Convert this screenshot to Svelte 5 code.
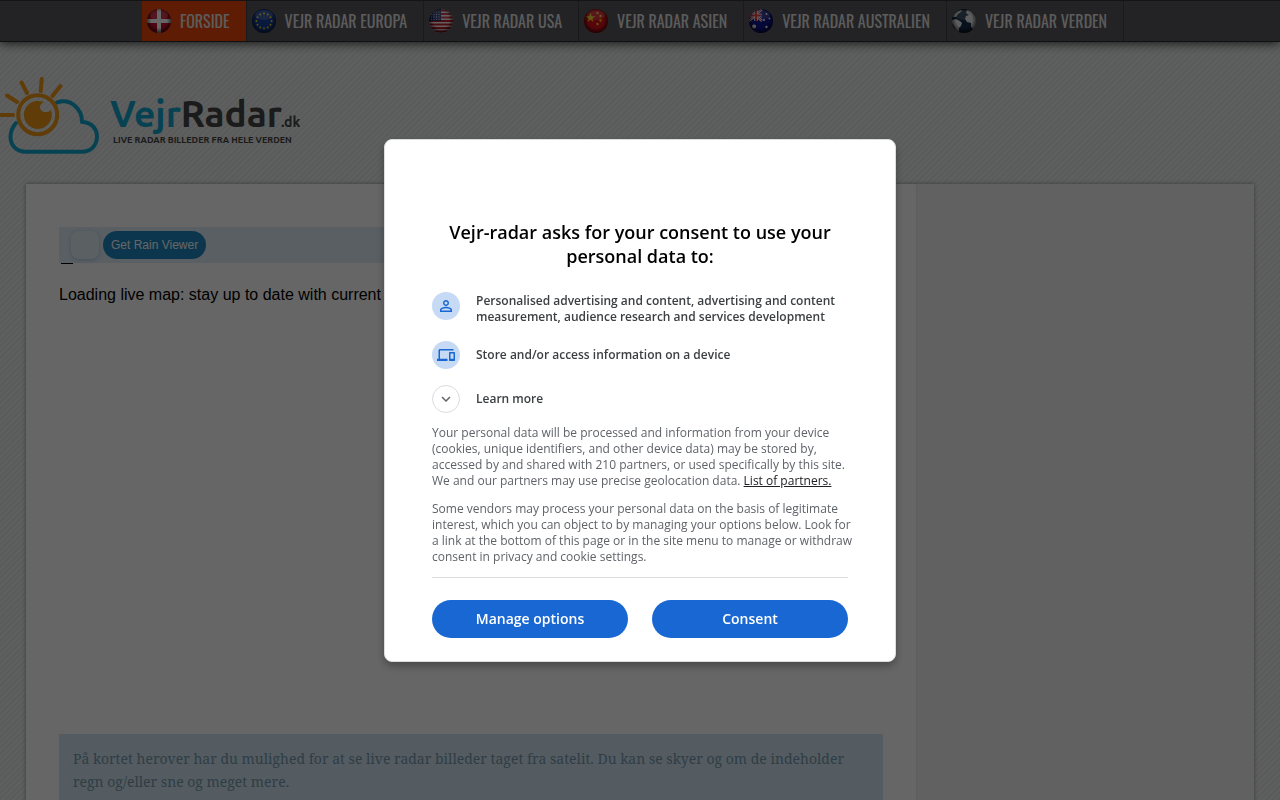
<script lang="ts">
  const regions = [
    { flag: "dk", label: "Forside" },
    { flag: "eu", label: "Vejr Radar Europa" },
    { flag: "us", label: "Vejr Radar USA" },
    { flag: "cn", label: "Vejr Radar Asien" },
    { flag: "au", label: "Vejr Radar Australien" },
    { flag: "world", label: "Vejr Radar Verden" },
  ]

  const euStars = Array.from({ length: 12 }, (_, i) => {
    const angle = (i * Math.PI) / 6
    return { x: 12 + 7.6 * Math.sin(angle), y: 12 - 7.6 * Math.cos(angle) }
  })

  let active = $state("dk")
</script>

<div class="page">
  <nav class="topbar" aria-label="Regioner">
    <ul>
      {#each regions as region}
        <li class:active={region.flag === active}>
          <a href="#{region.flag}" onclick={() => (active = region.flag)}>
            <svg class="flag" viewBox="0 0 24 24" aria-hidden="true">
              <g clip-path="url(#round)">
                {#if region.flag === "dk"}
                  <rect width="24" height="24" fill="#c8102e" />
                  <path d="M12 0V24M0 12H24" stroke="#fff" stroke-width="4" />
                {:else if region.flag === "eu"}
                  <rect width="24" height="24" fill="#16409c" />
                  {#each euStars as star}
                    <circle cx={star.x} cy={star.y} r="1" fill="#f0c810" />
                  {/each}
                {:else if region.flag === "us"}
                  <rect width="24" height="24" fill="#f0f0f0" />
                  <path
                    d="M0 1.500H24M0 5H24M0 8.500H24M0 12H24M0 15.500H24M0 19H24M0 22.500H24"
                    stroke="#c41a2c"
                    stroke-width="1.800"
                  />
                  <rect width="12" height="12" fill="#20306e" />
                  <path
                    d="M2 3H12M2 5.500H12M2 8H12M2 10.500H12"
                    stroke="#dde"
                    stroke-width="0.900"
                    stroke-dasharray="1 1.500"
                  />
                {:else if region.flag === "cn"}
                  <rect width="24" height="24" fill="#d8101a" />
                  <path
                    d="M6.500 3.500L7.700 7.200H11.500L8.400 9.500L9.600 13L6.500 10.800L3.400 13L4.600 9.500L1.500 7.200H5.300Z"
                    fill="#f5cf18"
                  />
                  <g fill="#f5cf18">
                    <circle cx="13.500" cy="4" r="1.200" />
                    <circle cx="16.500" cy="7" r="1.200" />
                    <circle cx="16.500" cy="11.500" r="1.200" />
                    <circle cx="13.500" cy="15" r="1.200" />
                  </g>
                {:else if region.flag === "au"}
                  <rect width="24" height="24" fill="#10148c" />
                  <path d="M0 0L13 12M13 0L0 12" stroke="#eee" stroke-width="2.400" />
                  <path d="M0 0L13 12M13 0L0 12" stroke="#d01c2c" stroke-width="0.900" />
                  <path d="M7 0V12M0 6.500H13" stroke="#eee" stroke-width="3.600" />
                  <path d="M7 0V12M0 6.500H13" stroke="#d8202c" stroke-width="2" />
                  <g fill="#fff">
                    <circle cx="5" cy="17.500" r="2" />
                    <circle cx="17.500" cy="5" r="1" />
                    <circle cx="15" cy="11" r="1" />
                    <circle cx="20.500" cy="9.500" r="1" />
                    <circle cx="17.500" cy="18" r="1.200" />
                  </g>
                {:else}
                  <rect width="24" height="24" fill="#142c48" />
                  <path
                    d="M0 11L4 10L8 12L10 14L9 17L7 19L7 23L4 21L2 17L0 14ZM2 5L6 2L10 1L9 3L6 5L4 8L1 8Z"
                    fill="#e6e8ea"
                  />
                  <path
                    d="M15 1L19 2L24 8V16L21 20L19 18L19 14L15 13L13 10L14 7L17 6L14 4Z"
                    fill="#e6e8ea"
                  />
                {/if}
                <rect width="24" height="24" fill="url(#shade)" />
                <ellipse cx="12" cy="6" rx="9" ry="5" fill="#fff" opacity="0.180" />
              </g>
            </svg>
            <span>{region.label}</span>
          </a>
        </li>
      {/each}
    </ul>
  </nav>

  <header class="masthead">
    <a href="#dk" aria-label="VejrRadar.dk">
      <svg class="logo" viewBox="0 0 300 90" aria-hidden="true">
        <defs>
          <clipPath id="round"><circle cx="12" cy="12" r="12" /></clipPath>
          <radialGradient id="shade" cx="0.500" cy="0.450" r="0.550">
            <stop offset="0.600" stop-color="#000" stop-opacity="0" />
            <stop offset="1" stop-color="#000" stop-opacity="0.650" />
          </radialGradient>
        </defs>
        <g fill="none" stroke-linecap="round">
          <path
            d="M57 32.500C70 28 82 38 82 52C91 52 97 58.500 97 66.500C97 75 91 81.700 82 81.700H26C16 81.700 10.500 75 10.500 67C10.500 61 12.500 57 16 53"
            stroke="#12a5cf"
            stroke-width="4"
            stroke-linejoin="round"
          />
          <circle cx="37.700" cy="44.700" r="19.500" stroke="#ee9716" stroke-width="4" />
          <path
            d="M1 45H13M7 25.500L17 32M21.500 12.500L27 23M41.700 9L40.700 21M60.500 16L52.500 26"
            stroke="#ee9716"
            stroke-width="4"
          />
        </g>
        <path
          d="M42 31.500A14 14 0 1 0 51 40C48 43 43 43 41 40C39 37 40 34 44 32Z"
          fill="#ee9716"
        />
        <text class="wordmark" x="110" y="57">
          <tspan fill="#12a5cf">Vejr</tspan><tspan fill="#444">Radar</tspan>
        </text>
        <text class="tld" x="281" y="57">.dk</text>
        <text class="tagline" x="113" y="73">LIVE RADAR BILLEDER FRA HELE VERDEN</text>
      </svg>
    </a>
  </header>

  <div class="card">
    <main>
      <div class="viewer-bar">
        <span class="viewer-icon"></span>
        <a class="viewer-link" href="#viewer">Get Rain Viewer</a>
      </div>
      <div class="map">
        <span class="dash"></span>
        <p>Loading live map: stay up to date with current</p>
      </div>
      <p class="notice">
        På kortet herover har du mulighed for at se live radar billeder taget fra satelit. Du kan
        se skyer og om de indeholder regn og/eller sne og meget mere.
      </p>
    </main>
    <aside></aside>
  </div>
</div>

<div class="overlay">
  <div class="dialog" role="dialog" aria-modal="true" aria-labelledby="consent-title">
    <h1 id="consent-title">Vejr-radar asks for your consent to use your personal data to:</h1>

    <ul class="purposes">
      <li>
        <span class="badge">
          <svg viewBox="0 0 24 24" aria-hidden="true">
            <path
              d="M12 5.900a2.100 2.100 0 1 1 0 4.200 2.100 2.100 0 0 1 0-4.200m0 9c2.970 0 6.100 1.460 6.100 2.100v1.100H5.900V17c0-.640 3.130-2.100 6.100-2.100M12 4C9.790 4 8 5.790 8 8s1.790 4 4 4 4-1.790 4-4-1.790-4-4-4zm0 9c-2.670 0-8 1.340-8 4v3h16v-3c0-2.660-5.330-4-8-4z"
            />
          </svg>
        </span>
        <span>
          Personalised advertising and content, advertising and content measurement, audience
          research and services development
        </span>
      </li>
      <li>
        <span class="badge">
          <svg viewBox="0 0 24 24" aria-hidden="true">
            <path
              d="M4 6h18V4H4c-1.100 0-2 .900-2 2v11H0v3h14v-3H4V6zm19 2h-6c-.550 0-1 .450-1 1v10c0 .550.450 1 1 1h6c.550 0 1-.450 1-1V9c0-.550-.450-1-1-1zm-1 9h-4v-7h4v7z"
            />
          </svg>
        </span>
        <span>Store and/or access information on a device</span>
      </li>
    </ul>

    <button type="button" class="more">
      <span class="badge badge-outline">
        <svg viewBox="0 0 24 24" aria-hidden="true">
          <path d="M7.410 8.590 12 13.170l4.590-4.580L18 10l-6 6-6-6z" />
        </svg>
      </span>
      <span>Learn more</span>
    </button>

    <p>
      Your personal data will be processed and information from your device (cookies, unique
      identifiers, and other device data) may be stored by, accessed by and shared with 210
      partners, or used specifically by this site. We and our partners may use precise geolocation
      data. <a href="#partners">List of partners.</a>
    </p>
    <p>
      Some vendors may process your personal data on the basis of legitimate interest, which you
      can object to by managing your options below. Look for a link at the bottom of this page or
      in the site menu to manage or withdraw consent in privacy and cookie settings.
    </p>

    <div class="actions">
      <button type="button">Manage options</button>
      <button type="button">Consent</button>
    </div>
  </div>
</div>

<style>
  :global(body) {
    overflow: hidden;
    background: #e8ecea;
  }

  .page {
    min-height: 100vh;
    font-family: "Liberation Sans", Arial, sans-serif;
    background: repeating-linear-gradient(135deg, #e1e7e4 0 2px, #ebeeec 2px 4px);
  }

  .topbar {
    box-sizing: border-box;
    height: 42px;
    padding-right: 14px;
    background: #58575c;
    border-top: 1px solid #343438;
    border-bottom: 1px solid #2c2c30;
    box-shadow: 0 1px 10px rgba(0, 0, 0, 0.8);
  }

  .topbar ul {
    display: flex;
    justify-content: center;
    height: 100%;
    margin: 0;
    padding: 0;
    list-style: none;
  }

  .topbar li {
    border-right: 1px solid #424146;
  }

  .topbar li.active {
    background: #ea460a;
  }

  .topbar a {
    display: flex;
    align-items: center;
    gap: 9px;
    height: 100%;
    padding: 0 16px 0 5px;
    color: #e6e6e6;
    font-family: Oswald, "Roboto Condensed", "Liberation Sans Narrow", sans-serif;
    font-size: 16px;
    text-decoration: none;
    text-transform: uppercase;
    white-space: nowrap;
  }

  .flag {
    width: 24px;
    height: 24px;
  }

  .masthead {
    padding: 28px 0 24px;
  }

  .masthead a {
    display: inline-block;
    vertical-align: top;
  }

  .logo {
    display: block;
    width: 300px;
    height: 90px;
    font-family: Ubuntu, "Noto Sans", sans-serif;
    font-weight: 700;
    fill: #444;
  }

  .wordmark {
    font-size: 37px;
  }

  .tld {
    font-size: 14px;
  }

  .tagline {
    font-size: 9px;
  }

  .card {
    display: grid;
    grid-template-columns: minmax(0, 890px) minmax(0, 338px);
    justify-content: center;
    min-height: 640px;
    margin: 0 26px;
    background: #f3f3f3;
    box-shadow: 0 0 4px rgba(0, 0, 0, 0.4);
  }

  main {
    padding: 43px 33px;
    background: #fff;
  }

  aside {
    box-shadow: inset 1px 0 2px rgba(0, 0, 0, 0.05);
  }

  .viewer-bar {
    display: flex;
    align-items: center;
    gap: 4px;
    height: 36px;
    padding-left: 12px;
    background: #e0edf7;
  }

  .viewer-icon {
    width: 28px;
    height: 28px;
    border-radius: 8px;
    background: #e3eff8;
    box-shadow: 0 1px 4px rgba(60, 110, 190, 0.3);
  }

  .viewer-link {
    padding: 0 8px;
    border-radius: 14px;
    background: #2088c0;
    color: #fff;
    font-size: 12px;
    line-height: 28px;
    text-decoration: none;
  }

  .map {
    height: 471px;
    font-size: 16px;
    line-height: 18px;
  }

  .dash {
    display: block;
    width: 12px;
    height: 1px;
    margin-left: 2px;
    background: #000;
  }

  .map p {
    margin: 22px 0 0;
  }

  .notice {
    margin: 0;
    padding: 13px 14px;
    background: #d2e5f2;
    color: #769aae;
    font-family: "Droid Serif", "Noto Serif", "DejaVu Serif Condensed", "DejaVu Serif", serif;
    font-size: 14px;
    line-height: 23px;
  }

  .overlay {
    position: fixed;
    inset: 0;
    display: flex;
    align-items: center;
    justify-content: center;
    background: rgba(0, 0, 0, 0.6);
  }

  .dialog {
    box-sizing: border-box;
    width: 512px;
    max-width: 100%;
    padding: 80px 47px 23px;
    border: 1px solid #dadce0;
    border-radius: 8px;
    background: #fff;
    box-shadow: 0 4px 8px rgba(0, 0, 0, 0.3);
    color: #5f6368;
    font-family: "Open Sans", sans-serif;
    font-size: 12px;
    line-height: 16px;
  }

  h1 {
    margin: 0 0 24px;
    color: #000;
    font-size: 18px;
    font-weight: 600;
    line-height: 24px;
    text-align: center;
  }

  .purposes {
    display: grid;
    gap: 16px;
    margin: 0 0 16px;
    padding: 0;
    list-style: none;
  }

  .purposes li,
  .more {
    display: flex;
    gap: 16px;
    color: #3c4043;
    font-weight: 600;
  }

  .purposes li {
    align-items: flex-start;
  }

  .purposes li > :last-child {
    align-self: center;
    padding-top: 1px;
  }

  .badge {
    box-sizing: border-box;
    display: flex;
    flex: none;
    align-items: center;
    justify-content: center;
    width: 28px;
    height: 28px;
    border-radius: 50%;
    background: #c6daf5;
    fill: #1967d2;
  }

  .badge svg {
    width: 18px;
    height: 18px;
  }

  .badge-outline {
    border: 1px solid #dadce0;
    background: #fff;
    fill: #5f6368;
  }

  .more {
    align-items: center;
    padding: 0;
    border: 0;
    background: none;
    font-family: inherit;
    font-size: 12px;
    line-height: 16px;
    cursor: pointer;
  }

  .dialog p {
    margin: 12px -8px 12px 0;
  }

  .dialog p a {
    color: #202124;
  }

  .actions {
    display: grid;
    grid-template-columns: 1fr 1fr;
    gap: 24px;
    padding-top: 22px;
    border-top: 1px solid #dadce0;
  }

  .actions button {
    height: 38px;
    border: 0;
    border-radius: 19px;
    background: #1967d2;
    color: #fff;
    font-family: inherit;
    font-size: 14px;
    font-weight: 600;
    cursor: pointer;
  }
</style>
